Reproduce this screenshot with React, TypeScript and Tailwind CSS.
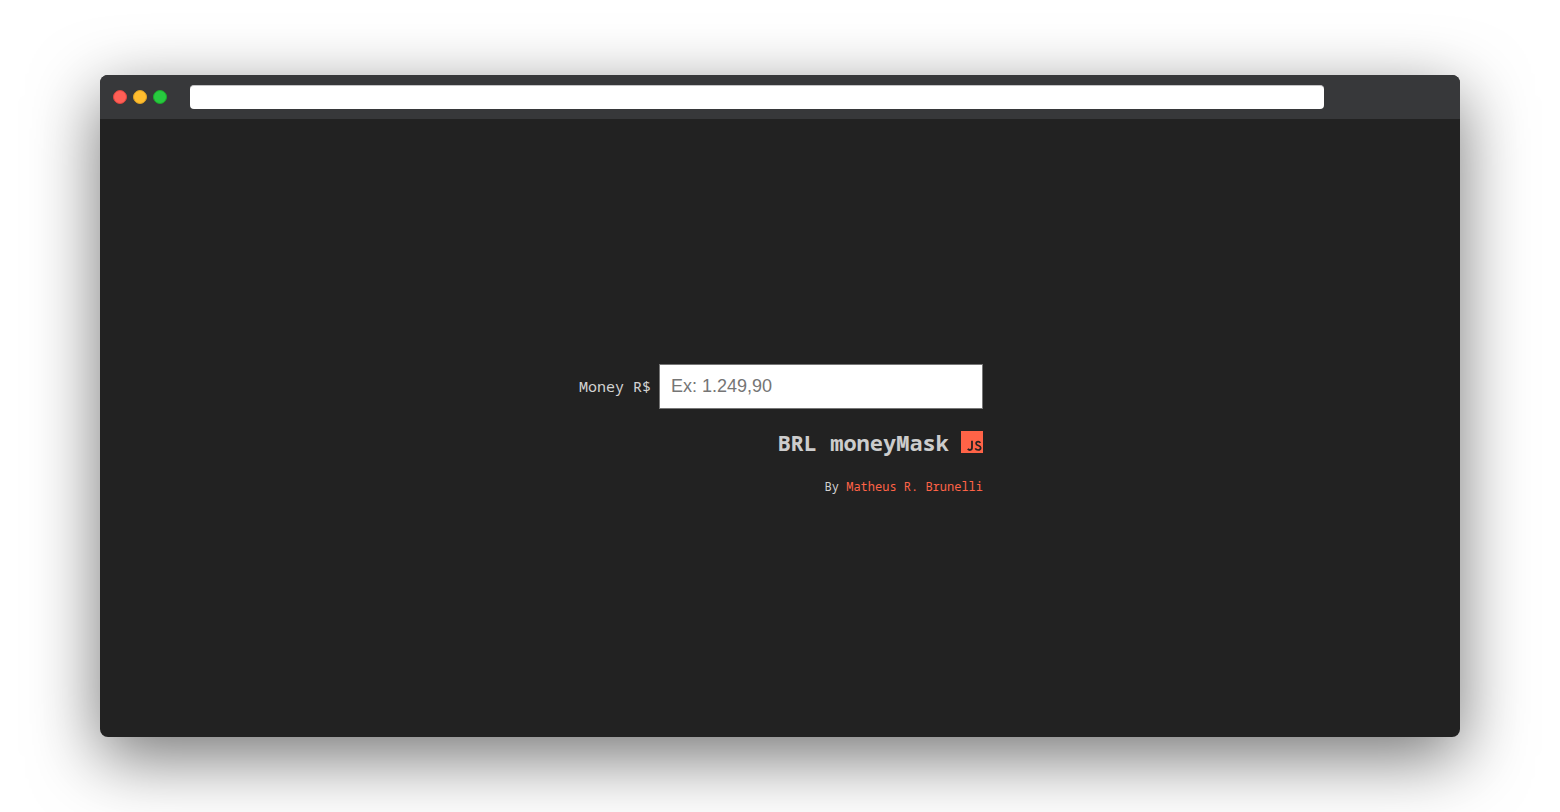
function JsLogo() {
  return (
    <svg viewBox="0 0 22 22" className="mb-[2px] size-[22px]" fill="none" aria-hidden="true">
      <rect width="22" height="22" fill="#ff6347" />
      <path d="M11 9.8v6.8c0 1.7-.8 2.4-2.1 2.4-.9 0-1.5-.3-2.1-1.1" stroke="#222222" strokeWidth="1.8" />
      <path
        d="M19.4 11.9c-.5-.8-1.2-1.2-2.2-1.2-1.2 0-2.1.7-2.1 1.8 0 2.5 4.6 1.6 4.6 4.2 0 1.4-1 2.3-2.6 2.3-1.3 0-2.3-.5-2.9-1.6"
        stroke="#222222"
        strokeWidth="1.7"
      />
    </svg>
  );
}

export default function App() {
  return (
    <div className="flex min-h-screen flex-col overflow-hidden bg-white px-[100px] py-[75px]">
      <div className="flex flex-1 flex-col overflow-clip rounded-lg bg-[#222222] shadow-[0_20px_68px_rgba(0,0,0,0.55)]">
        <header className="flex h-11 items-center bg-[#37383a] pl-[13px] pr-[136px]">
          <div className="flex gap-[6px]">
            <button aria-label="Close" className="size-[14px] rounded-full border border-[#e0443e] bg-[#ff5f56]" />
            <button aria-label="Minimize" className="size-[14px] rounded-full border border-[#dea123] bg-[#ffbd2e]" />
            <button aria-label="Maximize" className="size-[14px] rounded-full border border-[#1aab29] bg-[#27c93f]" />
          </div>
          <input
            aria-label="Address"
            className="ml-[23px] h-6 min-w-0 flex-1 rounded border-t border-[#c4c4c6] bg-white px-2 text-sm outline-none"
          />
        </header>
        <main className="flex flex-1 flex-col items-center justify-center pl-[2px] pt-[3px] font-['Noto_Sans_Mono','DejaVu_Sans_Mono',monospace] text-[#d3d3d3]">
          <div className="flex flex-col items-end">
            <div className="flex items-center gap-2">
              <label htmlFor="money" className="text-[15px]">Money R$</label>
              <input
                id="money"
                placeholder="Ex: 1.249,90"
                className="h-[45px] w-[324px] border border-[#767676] bg-white px-[11px] font-['Liberation_Sans',sans-serif] text-lg text-black placeholder:text-[#757575]"
              />
            </div>
            <h1 className="mt-[17px] flex items-center gap-3 text-[22px] font-bold text-[#cccccc]">
              BRL moneyMask <JsLogo />
            </h1>
            <p className="mt-5 text-xs">
              By <a href="#author" className="text-[#ff6347]">Matheus R. Brunelli</a>
            </p>
          </div>
        </main>
      </div>
    </div>
  );
}
